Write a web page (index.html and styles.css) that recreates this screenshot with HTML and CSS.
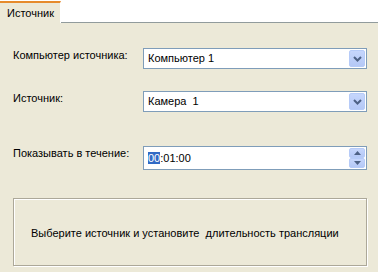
FILE: index.html
```html
<!DOCTYPE html>
<html lang="ru">
<head>
<meta charset="utf-8">
<title>Источник</title>
<link rel="stylesheet" href="styles.css">
</head>
<body>
<div class="window">
  <div class="tabstrip">
    <div class="tab">Источник</div>
    <div class="tab-rest"></div>
  </div>
  <div class="panel">
    <div class="row row-1">
      <label class="label">Компьютер источника:</label>
      <div class="combo">
        <span class="combo-text">Компьютер 1</span>
        <span class="combo-btn">
          <svg width="9" height="6" viewBox="0 0 9 6"><path d="M1 1 L4.5 4.5 L8 1" fill="none" stroke="#4D6185" stroke-width="2"/></svg>
        </span>
      </div>
    </div>
    <div class="row row-2">
      <label class="label">Источник:</label>
      <div class="combo">
        <span class="combo-text">Камера&nbsp; 1</span>
        <span class="combo-btn">
          <svg width="9" height="6" viewBox="0 0 9 6"><path d="M1 1 L4.5 4.5 L8 1" fill="none" stroke="#4D6185" stroke-width="2"/></svg>
        </span>
      </div>
    </div>
    <div class="row row-3">
      <label class="label">Показывать в течение:</label>
      <div class="spin">
        <span class="spin-text"><span class="sel">00</span>:01:00</span>
        <span class="spin-btns">
          <span class="spin-btn up"><svg width="7" height="4" viewBox="0 0 7 4"><path d="M0 4 L3.5 0 L7 4 Z" fill="#4D6185"/></svg></span>
          <span class="spin-btn down"><svg width="7" height="4" viewBox="0 0 7 4"><path d="M0 0 L3.5 4 L7 0 Z" fill="#4D6185"/></svg></span>
        </span>
      </div>
    </div>
    <div class="group">Выберите источник и установите&nbsp; длительность трансляции</div>
  </div>
</div>
</body>
</html>
```

FILE: styles.css
```css
html, body {
  margin: 0;
  padding: 0;
  background: #ffffff;
}
body {
  font-family: "Liberation Sans", Arial, sans-serif;
  font-size: 11px;
  color: #000;
}
.window {
  width: 378px;
  height: 272px;
  display: flex;
  flex-direction: column;
}
.tabstrip {
  display: flex;
  align-items: flex-end;
  height: 23px;
}
.tab {
  width: 61px;
  height: 22px;
  box-sizing: border-box;
  background: #ECE9D8;
  border-top: 2px solid #E68B2C;
  border-right: 1px solid #ffffff;
  padding: 4px 0 0 7px;
  line-height: 13px;
  white-space: nowrap;
}
.tab-rest {
  flex: 1;
  border-bottom: 1px solid #919B9C;
}
.panel {
  flex: 1;
  background: #ECE9D8;
  padding: 25px 11px 0 13px;
  display: flex;
  flex-direction: column;
}
.row {
  display: grid;
  grid-template-columns: 130px 1fr;
  align-items: start;
}
.row-2 { margin-top: 22px; }
.row-3 { margin-top: 34px; }
.label {
  line-height: 13px;
  padding-top: 1px;
  white-space: nowrap;
}
.combo, .spin {
  box-sizing: border-box;
  height: 21px;
  border: 1px solid #7F9DB9;
  background: #fff;
  display: flex;
  align-items: center;
  padding-left: 4px;
}
.spin { height: 24px; }
.combo-text, .spin-text {
  flex: 1;
  line-height: 13px;
  white-space: nowrap;
}
.combo-btn {
  width: 16px;
  height: 17px;
  margin-right: 1px;
  box-sizing: border-box;
  border: 1px solid #B6CBF8;
  border-radius: 2px;
  background: linear-gradient(#C6D6FC, #B4C8F6);
  display: flex;
  align-items: center;
  justify-content: center;
}
.sel {
  background: #316AC5;
  color: #fff;
}
.spin-btns {
  width: 16px;
  height: 20px;
  margin-right: 1px;
  display: flex;
  flex-direction: column;
}
.spin-btn {
  flex: 1;
  box-sizing: border-box;
  border: 1px solid #B6CBF8;
  border-radius: 2px;
  background: linear-gradient(#C6D6FC, #B4C8F6);
  display: flex;
  align-items: center;
  justify-content: center;
}
.group {
  margin-top: 28px;
  height: 68px;
  box-sizing: border-box;
  border: 1px solid #ACA899;
  box-shadow: inset 1px 1px 0 #ffffff, 1px 1px 0 #ffffff;
  display: flex;
  align-items: center;
  padding-left: 17px;
  padding-top: 2px;
  white-space: nowrap;
}
```
